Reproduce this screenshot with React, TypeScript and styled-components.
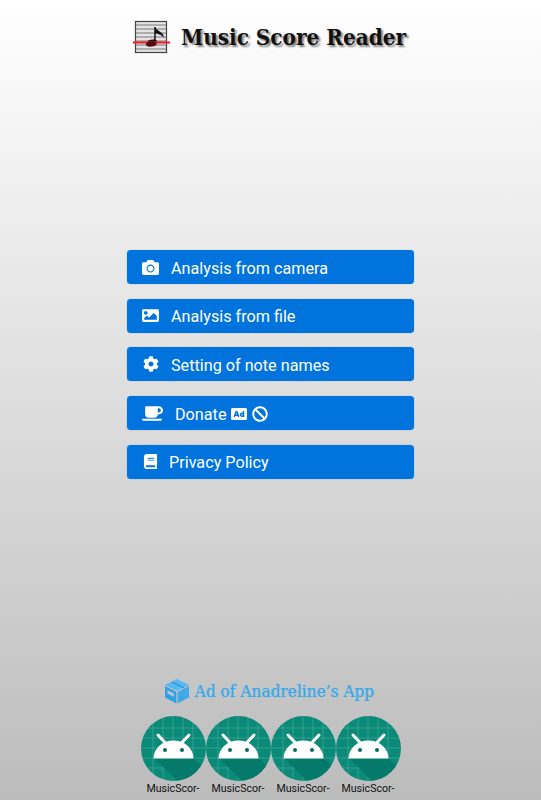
import styled, { createGlobalStyle } from "styled-components";
import { FaAd, FaBan, FaBook, FaCamera, FaCog, FaCoffee, FaImage } from "react-icons/fa";

const GlobalStyle = createGlobalStyle`
    html, body {
        margin: 0;
        padding: 0;
    }
`;

const Page = styled.div`
    width: 541px;
    height: 800px;
    overflow: hidden;
    display: flex;
    flex-direction: column;
    align-items: center;
    background: linear-gradient(#ffffff, #bcbcbc);
    font-family: Roboto, "Liberation Sans", sans-serif;
`;

const Header = styled.header`
    display: flex;
    align-items: center;
    gap: 11px;
    margin-top: 20px;
    margin-right: 2px;
    height: 34px;
`;

const Title = styled.h1`
    margin: 0;
    font-family: "DejaVu Serif Condensed", "DejaVu Serif", serif;
    font-stretch: condensed;
    font-size: 22.3px;
    font-weight: 700;
    color: #111;
    white-space: nowrap;
    text-shadow: 2px 2px 2px rgba(0, 0, 0, 0.5);
`;

const Menu = styled.nav`
    display: flex;
    flex-direction: column;
    gap: 14.7px;
    margin-top: 196px;
    width: 287px;
`;

const MenuButton = styled.button<{ $textLeft: number }>`
    display: flex;
    align-items: center;
    height: 34px;
    padding: 2px 0 0 ${(props) => props.$textLeft}px;
    border: 0;
    border-radius: 4px;
    background: #0073dc;
    box-shadow: 0 0 1px rgba(0, 60, 130, 0.5);
    color: #fff;
    font-family: inherit;
    font-size: 16.2px;
    position: relative;
`;

const IconSlot = styled.span<{ $left: number }>`
    position: absolute;
    left: ${(props) => props.$left}px;
    top: 0;
    bottom: 0;
    display: flex;
    align-items: center;
`;

const Extras = styled.span`
    display: inline-flex;
    align-items: center;
    gap: 5px;
    margin-left: 5px;
`;

const Footer = styled.footer`
    margin-top: auto;
    padding-bottom: 4px;
    display: flex;
    flex-direction: column;
    align-items: center;
`;

const AdTitle = styled.div`
    display: flex;
    align-items: center;
    gap: 5px;
    height: 28px;
    margin-right: 3px;
    font-family: "DejaVu Serif Condensed", "DejaVu Serif", serif;
    font-stretch: condensed;
    font-size: 17.1px;
    color: #33a9ee;
    white-space: nowrap;
    text-shadow: 0 0 1px rgba(51, 169, 238, 0.6);
`;

const AppRow = styled.div`
    display: flex;
    margin-top: 11px;
`;

const AppItem = styled.div`
    width: 65px;
    display: flex;
    flex-direction: column;
    align-items: center;
`;

const AppLabel = styled.span`
    width: 65px;
    height: 14px;
    margin-top: 1px;
    overflow: hidden;
    text-align: center;
    font-size: 10.6px;
    line-height: 14px;
    color: #111;
`;

function ScoreLogo() {
    return (
        <svg width="37" height="34" viewBox="0 0 37 34">
            <rect x="2.5" y="1.5" width="31" height="31" fill="#e4e4e4" stroke="#444" strokeWidth="1.2" />
            {[5, 9, 13, 17, 21, 25, 29].map((y) => (
                <line key={y} x1="3" x2="33" y1={y} y2={y} stroke="#777" strokeWidth="1" />
            ))}
            <path d="M22 7 V23" stroke="#111" strokeWidth="1.5" />
            <path d="M22 7 C23 11 32 12 30.5 18 C29.5 15 25 14 22 13 Z" fill="#111" />
            <ellipse cx="18.5" cy="23" rx="5.8" ry="3.4" fill="#111" transform="rotate(-15 18.5 23)" />
            <rect x="0" y="21.5" width="37" height="2" fill="#ee1c24" />
            <ellipse cx="18.5" cy="24" rx="5" ry="2.3" fill="#5a0a10" />
        </svg>
    );
}

function BoxLogo() {
    return (
        <svg width="26" height="26" viewBox="0 0 26 26">
            <path d="M13 1 L25 7 L13 13 L1 7 Z" fill="#55b8f0" />
            <path d="M1 8 L12.4 14 V25.5 L1 19.5 Z" fill="#2f9fe6" />
            <path d="M13.6 14 L25 8 V19.5 L13.6 25.5 Z" fill="#3fa9ea" />
            <path d="M3.5 12 L10 15.4 V19 L3.5 15.6 Z" fill="#b4c4d0" />
            <path d="M8 4 L20 10" stroke="#2a8fd6" strokeWidth="1.2" />
        </svg>
    );
}

function AppIcon() {
    const grid = [12, 22, 32, 42, 52];
    return (
        <svg width="65" height="65" viewBox="0 0 65 65">
            <defs>
                <clipPath id="disc">
                    <circle cx="32.5" cy="32.5" r="32.5" />
                </clipPath>
            </defs>
            <g clipPath="url(#disc)">
                <rect width="65" height="65" fill="#0a8a78" />
                {grid.map((p) => (
                    <g key={p} stroke="#47a898" strokeWidth="0.7">
                        <line x1={p} x2={p} y1="0" y2="65" />
                        <line x1="0" x2="65" y1={p} y2={p} />
                    </g>
                ))}
                <path d="M13 42 H52.5 L65 54 V65 H36 Z" fill="#067a6a" />
            </g>
            <path d="M12.5 42.5 A20 18 0 0 1 52.5 42.5 Z" fill="#fff" />
            <path d="M17 19 L24.5 27 M48 19 L40.5 27" stroke="#fff" strokeWidth="3" strokeLinecap="round" />
            <circle cx="24" cy="34" r="2" fill="#056b5e" />
            <circle cx="41" cy="34" r="2" fill="#056b5e" />
        </svg>
    );
}

function App() {
    return (
        <Page>
            <GlobalStyle />
            <Header>
                <ScoreLogo />
                <Title>Music Score Reader</Title>
            </Header>
            <Menu>
                <MenuButton $textLeft={44}>
                    <IconSlot $left={15}>
                        <FaCamera size={17} />
                    </IconSlot>
                    Analysis from camera
                </MenuButton>
                <MenuButton $textLeft={44}>
                    <IconSlot $left={15}>
                        <FaImage size={17} />
                    </IconSlot>
                    Analysis from file
                </MenuButton>
                <MenuButton $textLeft={44}>
                    <IconSlot $left={16}>
                        <FaCog size={16} />
                    </IconSlot>
                    Setting of note names
                </MenuButton>
                <MenuButton $textLeft={48}>
                    <IconSlot $left={15}>
                        <FaCoffee size={21} />
                    </IconSlot>
                    Donate
                    <Extras>
                        <FaAd size={16} />
                        <FaBan size={16} />
                    </Extras>
                </MenuButton>
                <MenuButton $textLeft={42}>
                    <IconSlot $left={16}>
                        <FaBook size={15} />
                    </IconSlot>
                    Privacy Policy
                </MenuButton>
            </Menu>
            <Footer>
                <AdTitle>
                    <BoxLogo />
                    Ad of Anadreline’s App
                </AdTitle>
                <AppRow>
                    {[0, 1, 2, 3].map((i) => (
                        <AppItem key={i}>
                            <AppIcon />
                            <AppLabel>MusicScor-</AppLabel>
                        </AppItem>
                    ))}
                </AppRow>
            </Footer>
        </Page>
    );
}

export default App;
